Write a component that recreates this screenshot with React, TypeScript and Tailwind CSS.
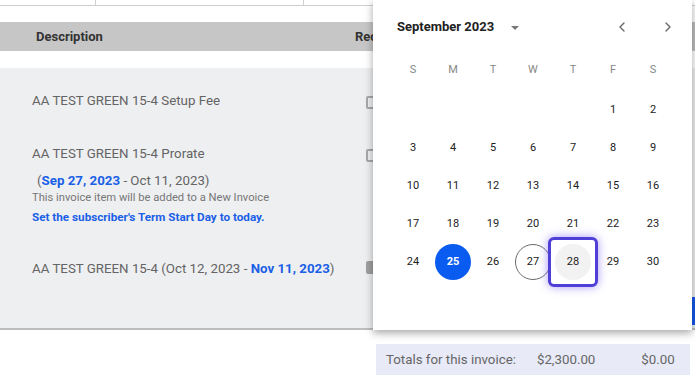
import { ChevronLeft, ChevronRight } from "lucide-react";

const weekLetters = ["S", "M", "T", "W", "T", "F", "S"];

// Sept 2023 starts on a Friday
const days: (number | null)[] = [null, null, null, null, null, 1, 2];
for (let d = 3; d <= 30; d++) days.push(d);

function DayCell({ day }: { day: number | null }) {
	if (day === null) return <div className="h-[38px]" />;

	if (day === 25) {
		return (
			<div className="h-[38px] flex items-center justify-center">
				<div className="w-9 h-9 shrink-0 rounded-full bg-[#0a5cf0] text-white font-bold flex items-center justify-center">25</div>
			</div>
		);
	}
	if (day === 27) {
		return (
			<div className="h-[38px] flex items-center justify-center">
				<div className="w-9 h-9 shrink-0 rounded-full border border-[#6b6b6b] flex items-center justify-center">27</div>
			</div>
		);
	}
	if (day === 28) {
		return (
			<div className="h-[38px] flex items-center justify-center relative z-10">
				<div className="w-[50px] h-[50px] shrink-0 rounded-[6px] border-[3px] border-[#4f3fd6] shadow-[0_0_10px_rgba(100,70,240,0.55)] flex items-center justify-center bg-white">
					<div className="w-9 h-9 shrink-0 rounded-full bg-[#f2f2f2] flex items-center justify-center">28</div>
				</div>
			</div>
		);
	}
	return <div className="h-[38px] flex items-center justify-center">{day}</div>;
}

function Calendar() {
	return (
		<div className="absolute left-[373px] top-0 w-[319px] h-[330px] bg-white shadow-[0_3px_8px_rgba(0,0,0,0.35)] px-5 z-10">
			<div className="flex items-center h-[54px] pl-1">
				<span className="text-[13px] font-bold text-[#222]">September 2023</span>
				<span className="ml-[17px] mt-[1px] w-0 h-0 border-l-[4px] border-r-[4px] border-t-[4px] border-l-transparent border-r-transparent border-t-[#777]" />
				<div className="ml-auto flex items-center gap-[30px] text-[#666] -mr-[4px]">
					<ChevronLeft size={16} strokeWidth={2} />
					<ChevronRight size={16} strokeWidth={2} />
				</div>
			</div>
			<div className="grid grid-cols-7 w-[280px] text-[11px] text-[#888] h-[30px] items-center pt-[2px]">
				{weekLetters.map((l, i) => (
					<div key={i} className="text-center">{l}</div>
				))}
			</div>
			<div className="grid grid-cols-7 w-[280px] text-[11px] text-[#222] pt-[7px]">
				{days.map((d, i) => (
					<DayCell key={i} day={d} />
				))}
			</div>
		</div>
	);
}

function Checkbox({ checked }: { checked?: boolean }) {
	return (
		<div className={`w-[13px] h-[13px] rounded-[2px] border-2 ${checked ? "bg-[#a0a0a0] border-[#a0a0a0]" : "border-[#a8a8a8]"}`} />
	);
}

export default function App() {
	return (
		<div className="relative w-[695px] h-[377px] overflow-hidden bg-white font-['Roboto',sans-serif]">
			<div className="flex h-[6px] border-b border-[#cfcfcf]">
				<div className="w-[96px] border-r border-[#cfcfcf]" />
				<div className="w-[208px] border-r border-[#cfcfcf]" />
			</div>
			<div className="h-4" />
			<div className="flex items-center h-[29px] bg-[#c6c6c6] text-[13px] font-bold text-[#333]">
				<span className="ml-[36px]">Description</span>
				<span className="ml-[252px]">Recurring</span>
			</div>
			<div className="h-[17px]" />
			<div className="h-[262px] bg-[#eeeff1] border-b-2 border-[#bdbdbd] text-[13.3px] text-[#646464]">
				<div className="flex items-start pt-[23px] pl-[32px]">
					<span className="w-[334px]">AA TEST GREEN 15-4 Setup Fee</span>
					<div className="mt-[5px]"><Checkbox /></div>
				</div>
				<div className="flex items-start pt-[33px] pl-[32px]">
					<div className="w-[334px]">
						<div>AA TEST GREEN 15-4 Prorate</div>
						<div className="mt-[7px] pl-[5px]">
							(<span className="text-[#1a5fe6] font-bold">Sep 27, 2023</span> - Oct 11, 2023)
						</div>
						<div className="text-[11.2px] text-[#777] leading-[14px]">This invoice item will be added to a New Invoice</div>
						<div className="text-[11.7px] text-[#1a5fe6] font-bold mt-[4px]">Set the subscriber's Term Start Day to today.</div>
					</div>
					<div className="mt-[5px]"><Checkbox /></div>
				</div>
				<div className="flex items-start pt-[33px] pl-[32px]">
					<span className="w-[334px]">
						AA TEST GREEN 15-4 (Oct 12, 2023 - <span className="text-[#1a5fe6] font-bold">Nov 11, 2023</span>)
					</span>
					<div className="mt-[2px]"><Checkbox checked /></div>
				</div>
			</div>
			<div className="flex justify-end mt-[14px] pr-[5px]">
				<div className="w-[314px] h-[31px] bg-[#e8eaf7] flex items-center text-[13.3px] text-[#666]">
					<span className="ml-[10px]">Totals for this invoice:</span>
					<span className="ml-[21px]">$2,300.00</span>
					<span className="ml-[46px]">$0.00</span>
				</div>
			</div>
			<Calendar />
			<div className="absolute right-0 top-[22px] w-[3px] h-[28px] bg-[#bdbdbd]" />
			<div className="absolute right-0 top-[297px] w-[3px] h-[28px] bg-[#1658e8]" />
		</div>
	);
}
